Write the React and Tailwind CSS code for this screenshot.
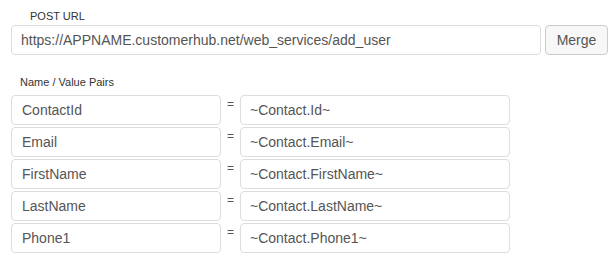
export default function App() {
  const rows = [
    ["ContactId", "~Contact.Id~"],
    ["Email", "~Contact.Email~"],
    ["FirstName", "~Contact.FirstName~"],
    ["LastName", "~Contact.LastName~"],
    ["Phone1", "~Contact.Phone1~"],
  ];
  return (
    <div className="w-[616px] h-[276px] bg-white pl-[11px] pt-[10px] font-['Liberation_Sans',Arial,sans-serif] text-[#555]">
      <div className="ml-[19px] text-[11px] leading-[13px] text-[#333] mb-[2px]">POST URL</div>
      <div className="flex gap-[4px]">
        <div className="w-[530px] h-[30px] border border-[#ddd] rounded-[4px] flex items-center pl-[9px] text-[14px]">
          https://APPNAME.customerhub.net/web_services/add_user
        </div>
        <div className="w-[63px] h-[30px] border border-[#ccc] rounded-[4px] bg-[#f7f7f7] flex items-center justify-center text-[14px] text-[#555]">
          Merge
        </div>
      </div>
      <div className="ml-[9px] mt-[21px] text-[11px] leading-[13px] text-[#333] mb-[6px]">Name / Value Pairs</div>
      <div className="flex flex-col gap-[2px]">
        {rows.map(([n, v]) => (
          <div key={n} className="flex">
            <div className="w-[210px] h-[30px] border border-[#ddd] rounded-[4px] flex items-center pl-[10px] text-[14px]">
              {n}
            </div>
            <div className="w-[19px] text-center text-[12px] leading-[14px] pt-[2px] text-[#555]">=</div>
            <div className="w-[270px] h-[30px] border border-[#ddd] rounded-[4px] flex items-center pl-[9px] text-[14px]">
              {v}
            </div>
          </div>
        ))}
      </div>
    </div>
  );
}
